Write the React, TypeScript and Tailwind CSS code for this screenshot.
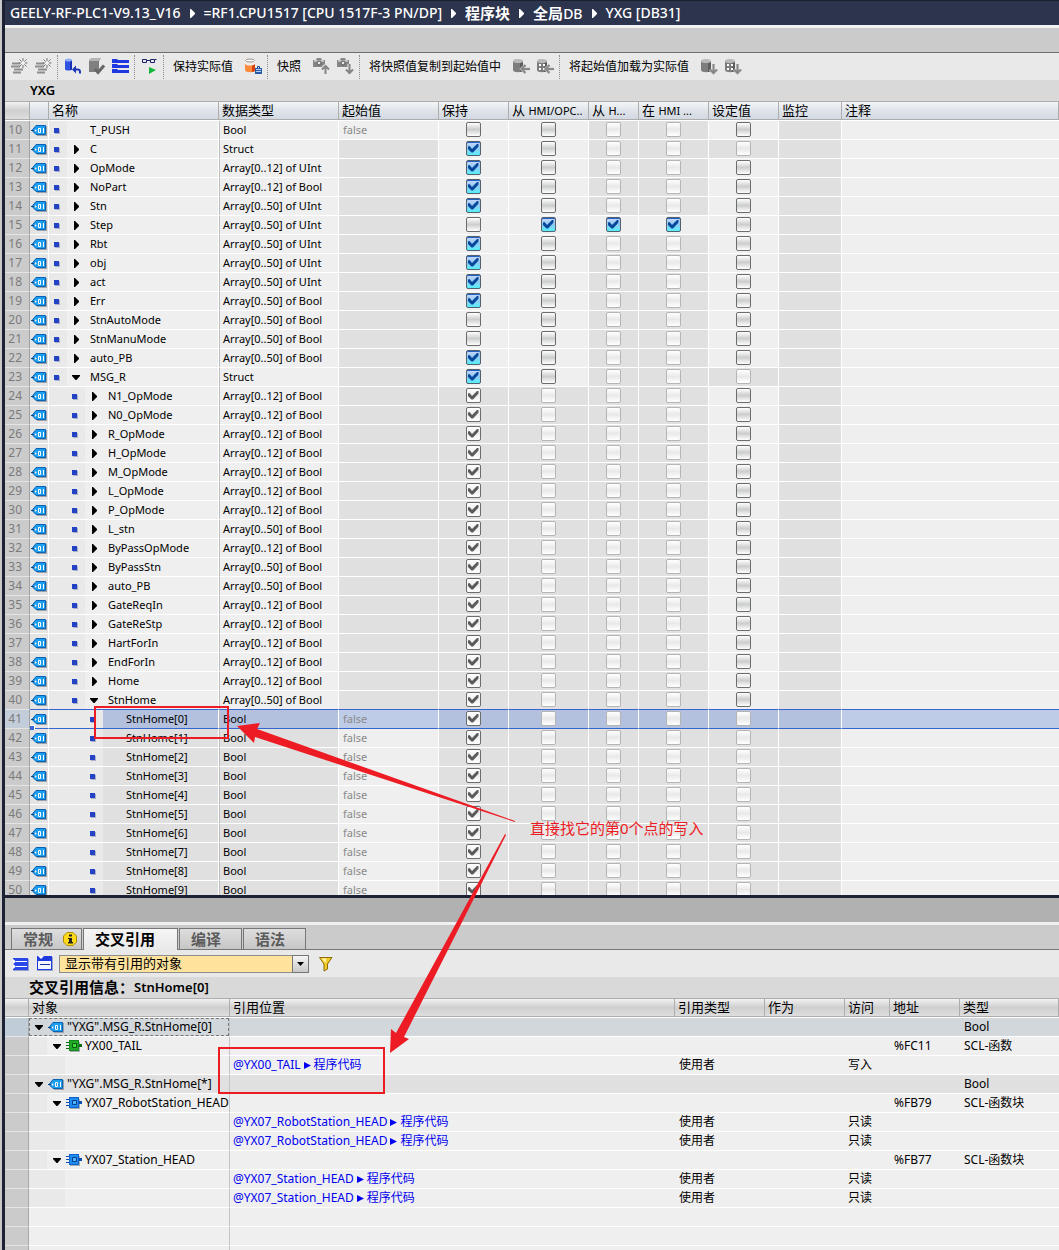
import type { ReactNode } from "react";

type Box = "on" | "off" | "locked" | "disabled";

type Variable = {
  no: number;
  name: string;
  type: string;
  level: 1 | 2 | 3;
  open?: boolean;
  leaf?: boolean;
  start?: string;
  boxes: [Box, Box, Box, Box, Box];
  selected?: boolean;
};

const top = (no: number, name: string, type: string, retain: Box): Variable => ({
  no,
  name,
  type,
  level: 1,
  boxes: [retain, "off", "disabled", "disabled", type === "Struct" ? "disabled" : "off"],
});

const groupNames = [
  "N1_OpMode", "N0_OpMode", "R_OpMode", "H_OpMode", "M_OpMode", "L_OpMode", "P_OpMode", "L_stn",
  "ByPassOpMode", "ByPassStn", "auto_PB", "GateReqIn", "GateReStp", "HartForIn", "EndForIn", "Home", "StnHome",
];
const longArrays = ["L_stn", "ByPassStn", "auto_PB", "StnHome"];

const variables: Variable[] = [
  { ...top(10, "T_PUSH", "Bool", "off"), leaf: true, start: "false" },
  top(11, "C", "Struct", "on"),
  top(12, "OpMode", "Array[0..12] of UInt", "on"),
  top(13, "NoPart", "Array[0..12] of Bool", "on"),
  top(14, "Stn", "Array[0..50] of UInt", "on"),
  { ...top(15, "Step", "Array[0..50] of UInt", "off"), boxes: ["off", "on", "on", "on", "off"] },
  top(16, "Rbt", "Array[0..50] of UInt", "on"),
  top(17, "obj", "Array[0..50] of UInt", "on"),
  top(18, "act", "Array[0..50] of UInt", "on"),
  top(19, "Err", "Array[0..50] of Bool", "on"),
  top(20, "StnAutoMode", "Array[0..50] of Bool", "off"),
  top(21, "StnManuMode", "Array[0..50] of Bool", "off"),
  top(22, "auto_PB", "Array[0..50] of Bool", "on"),
  { ...top(23, "MSG_R", "Struct", "on"), open: true },
  ...groupNames.map((name, i): Variable => ({
    no: 24 + i,
    name,
    type: longArrays.includes(name) ? "Array[0..50] of Bool" : "Array[0..12] of Bool",
    level: 2,
    open: name === "StnHome",
    boxes: ["locked", "disabled", "disabled", "disabled", "off"],
  })),
  ...Array.from({ length: 10 }, (_, i): Variable => ({
    no: 41 + i,
    name: `StnHome[${i}]`,
    type: "Bool",
    level: 3,
    leaf: true,
    start: "false",
    selected: i === 0,
    boxes: ["locked", "disabled", "disabled", "disabled", "disabled"],
  })),
];

const boxLabels = ["保持", "从 HMI/OPC UA 可访问", "从 HMI 可写", "在 HMI 可见", "设定值"];

type Reference = {
  level: 0 | 1 | 2;
  label?: string;
  icon?: "tag" | "fc" | "fb";
  place?: string;
  kind?: string;
  access?: string;
  address?: string;
  type?: string;
};

const usage = (place: string, access: string): Reference => ({ level: 2, place, kind: "使用者", access });

const references: Reference[] = [
  { level: 0, label: '"YXG".MSG_R.StnHome[0]', icon: "tag", type: "Bool" },
  { level: 1, label: "YX00_TAIL", icon: "fc", address: "%FC11", type: "SCL-函数" },
  usage("@YX00_TAIL", "写入"),
  { level: 0, label: '"YXG".MSG_R.StnHome[*]', icon: "tag", type: "Bool" },
  { level: 1, label: "YX07_RobotStation_HEAD", icon: "fb", address: "%FB79", type: "SCL-函数块" },
  usage("@YX07_RobotStation_HEAD", "只读"),
  usage("@YX07_RobotStation_HEAD", "只读"),
  { level: 1, label: "YX07_Station_HEAD", icon: "fb", address: "%FB77", type: "SCL-函数块" },
  usage("@YX07_Station_HEAD", "只读"),
  usage("@YX07_Station_HEAD", "只读"),
];

function Caret({ open }: { open?: boolean }) {
  return open ? (
    <svg width="8" height="5" viewBox="0 0 8 5"><path d="M0 0h8v1L4.500 5h-1L0 1z" /></svg>
  ) : (
    <svg width="5" height="9" viewBox="0 0 5 9"><path d="M0 0h1l4 4v1L1 9H0z" /></svg>
  );
}

function TagIcon() {
  return (
    <svg width="16" height="11" viewBox="0 0 16 11" className="shrink-0">
      <path d="M5 1h11v10H6z" fill="#9aa3ab" />
      <path d="M1 5.5 5 .5h9.5v9H5z" fill="#1b9df0" stroke="#0a62b4" />
      <path d="M0 5.500h5" stroke="#0a4a86" />
      <circle cx="4.500" cy="5.500" r="1" fill="#fff" />
      <path d="M7.500 3.500h2v4h-2zM12.500 3v5" fill="none" stroke="#fff" />
    </svg>
  );
}

function BlockIcon({ green }: { green?: boolean }) {
  return (
    <svg width="16" height="12" viewBox="0 0 16 12" className="shrink-0">
      <path d="M4 2h10v10H4z" fill="#a8adb5" />
      <path d="M0 2.500h4M0 5.500h4M0 8.500h4" stroke={green ? "#0b6a12" : "#0a4fb0"} />
      <path d="M12 5.500h4" stroke={green ? "#0b6a12" : "#0a4fb0"} strokeWidth="3" />
      <path d="M3 0h10v11H3z" fill={green ? "#138a1c" : "#0f62c8"} />
      <path d="M4 1h8v9H4z" fill={green ? "#22a92c" : "#1f8cf2"} />
      <path d="M6.500 3.500h4v4h-4z" fill={green ? "#3fe03a" : "#4fb4ff"} stroke={green ? "#0b5a12" : "#0a3f90"} />
    </svg>
  );
}

const boxStyles: Record<Box, string> = {
  on: "border-[#55606e] bg-linear-to-b from-[#c9d9fa] via-[#8fc8f0] to-[#4ff0fa] shadow-[inset_0_1px_0_#2262c4]",
  off: "border-[#6c6c6c] bg-linear-to-b from-white via-[#cccdce] to-white",
  locked: "border-[#6c6c6c] bg-linear-to-b from-white via-[#ededed] to-white",
  disabled: "border-[#b5b5b5] bg-linear-to-b from-white via-[#e9e9e9] to-white",
};

function CheckBox({ state, label }: { state: Box; label: string }) {
  const checked = state === "on" || state === "locked";
  return (
    <span className="grid h-[18px] content-start items-center justify-items-center pt-px">
      <input
        type="checkbox"
        aria-label={label}
        defaultChecked={checked}
        disabled={state === "locked" || state === "disabled"}
        className={`col-start-1 row-start-1 size-[15px] appearance-none rounded-[2px] border ${boxStyles[state]}`}
      />
      {checked && (
        <svg width="11" height="9" viewBox="0 0 11 9" className="pointer-events-none col-start-1 row-start-1">
          <path d="M0 2.500 1.500 2 4 5 9 0l1.500 0v2.500L5 8.500H3.500L0 5z" fill={state === "on" ? "#07489c" : "#5a5a5a"} />
        </svg>
      )}
    </span>
  );
}

function Cylinder({ fill = "#7d7d7d", lid = "#b9b9b9", shade = "#5d5d5d" }) {
  return (
    <>
      <path d="M0 3v9c0 3 10 3 10 0V3z" fill={fill} />
      <path d="M7 4v10c2 0 3-1 3-2V3z" fill={shade} />
      <ellipse cx="5" cy="3" rx="5" ry="2" fill={lid} />
    </>
  );
}

function Icon({ children }: { children: ReactNode }) {
  return <svg width="17" height="17" viewBox="0 0 17 17" fill="none">{children}</svg>;
}

const insertIcon = (
  <Icon>
    <path d="M1 5.500h8M0 8.500h9M3 11.500h9M2 14.500h8" stroke="#8d8d8d" strokeWidth="2" />
    <path d="M12 0v10M7.500 5h9M8.500 1.500l7 7M15.500 1.500l-7 7" stroke="#777" />
    <circle cx="12" cy="5" r="2" fill="#f2f2f2" />
  </Icon>
);

const upArrow = "M12.500 16V8M9 11.500 12.500 8l3.500 3.500";
const downArrow = "M12.500 6v9M9 11.500l3.500 3.500 3.500-3.500";
const leftArrow = "M17 11H9M12.500 7l-4 4 4 4";

function CameraIcon({ arrow }: { arrow: string }) {
  return (
    <Icon>
      <path d="M0 2h3l1-2h4l1 2h3v7H0z" fill="#858585" />
      <path d="M1 2h10v2H1z" fill="#bdbdbd" />
      <circle cx="6" cy="5" r="2" fill="#e6e6e6" stroke="#555" />
      <path d={arrow} stroke="#e9e9e9" strokeWidth="4" />
      <path d={arrow} stroke="#858585" strokeWidth="2" />
    </Icon>
  );
}

function StoreIcon({ arrow, dots }: { arrow: string; dots?: boolean }) {
  return (
    <Icon>
      <Cylinder />
      {dots && <path d="M2 7h2M6 7h2M2 11h2M6 11h2" stroke="#fff" strokeWidth="2" />}
      <path d={arrow} stroke="#d4d4d4" strokeWidth="3" />
      <path d={arrow} stroke="#888" strokeWidth="2" />
    </Icon>
  );
}

function ToolButton({ label, children }: { label: string; children: ReactNode }) {
  return (
    <button type="button" aria-label={label} className="flex h-6 w-6 shrink-0 items-center justify-center">
      {children}
    </button>
  );
}

function Separator() {
  return <div className="mx-[2px] h-6 w-px shrink-0 border-l border-dotted border-[#8e8e8e]" />;
}

function ToolText({ children }: { children: ReactNode }) {
  return <button type="button" className="mr-2 ml-[7px] whitespace-nowrap">{children}</button>;
}

function Breadcrumb() {
  const parts: ReactNode[] = [
    "GEELY-RF-PLC1-V9.13_V16",
    "=RF1.CPU1517 [CPU 1517F-3 PN/DP]",
    <span className="text-[15px] font-bold">程序块</span>,
    <><span className="text-[15px] font-bold">全局</span>DB</>,
    "YXG [DB31]",
  ];
  return (
    <nav className="flex h-[25px] shrink-0 items-center gap-[9px] border-t border-[#1b2030] bg-[#2d344d] pl-[5px] text-[14px] leading-none font-medium whitespace-nowrap text-white">
      {parts.map((part, i) => (
        <div key={i} className="flex items-center gap-[9px]">
          {i > 0 && <svg width="5" height="9" viewBox="0 0 5 9"><path d="M0 0h1l4 4v1L1 9H0z" fill="#fff" /></svg>}
          <span>{part}</span>
        </div>
      ))}
    </nav>
  );
}

function Toolbar() {
  return (
    <div className="flex h-7 shrink-0 items-center border-t border-[#6f6f6f] bg-[#e9e9e9] pl-[2px] text-[12px]">
      <ToolButton label="插入行">{insertIcon}</ToolButton>
      <ToolButton label="添加行">{insertIcon}</ToolButton>
      <Separator />
      <ToolButton label="复位起始值">
        <Icon>
          <path d="M1 2v9c0 2 7 2 7 0V2z" fill="#2f52e0" />
          <path d="M6 3v9c1 0 2 0 2-1V2z" fill="#1a2fb8" />
          <ellipse cx="4.500" cy="2" rx="3.500" ry="1.500" fill="#8fb0ff" />
          <path d="M10 11.500h4c2 0 2 1 2 4" stroke="#1c35b4" strokeWidth="2" />
          <path d="M8 11.500l4-4v8z" fill="#1c35b4" />
        </Icon>
      </ToolButton>
      <ToolButton label="更新接口">
        <Icon>
          <path d="M1 2 4 0h9L11 3v11H1z" fill="#808080" />
          <path d="M1 2 4 0h9l-2 3H1z" fill="#b4b4b4" />
          <path d="M7 11l3 3.500 6-7" stroke="#666" strokeWidth="3" />
        </Icon>
      </ToolButton>
      <ToolButton label="展开模式">
        <Icon>
          <path d="M0 1h5l1 1h11v3H0zM0 6h5l1 1h11v3H0zM0 11h5l1 1h11v3H0z" fill="#2038e0" />
        </Icon>
      </ToolButton>
      <Separator />
      <ToolButton label="全部监视">
        <Icon>
          <path d="M1.500 1.500h4v3h-4zM9.500 1.500h4v3h-4zM5.500 2.500h4M13.500 1.500h2" stroke="#1b2168" />
          <path d="M8 9l7 3-7 4z" fill="#15b83c" />
        </Icon>
      </ToolButton>
      <Separator />
      <ToolText>保持实际值</ToolText>
      <ToolButton label="保持实际值">
        <Icon>
          <Cylinder fill="#ff8a3c" lid="#d9d4d0" shade="#d8440e" />
          <path d="M0 3v3c2 2 8 2 10 0V3" fill="#efebe8" />
          <ellipse cx="5" cy="2.500" rx="4.500" ry="1.500" fill="#fff" stroke="#9a8f88" />
          <path d="M12.500 10V8.500h2V10" stroke="#1d478e" />
          <path d="M10 10h7v6h-7z" fill="#265aa8" />
          <path d="M11 11.500h5M11 13.500h5" stroke="#b9d2f5" />
        </Icon>
      </ToolButton>
      <Separator />
      <ToolText>快照</ToolText>
      <ToolButton label="加载快照"><CameraIcon arrow={upArrow} /></ToolButton>
      <ToolButton label="创建快照"><CameraIcon arrow={downArrow} /></ToolButton>
      <Separator />
      <ToolText>将快照值复制到起始值中</ToolText>
      <ToolButton label="复制全部快照值"><StoreIcon arrow={leftArrow} /></ToolButton>
      <ToolButton label="复制设定快照值"><StoreIcon arrow={leftArrow} dots /></ToolButton>
      <Separator />
      <ToolText>将起始值加载为实际值</ToolText>
      <ToolButton label="加载全部起始值"><StoreIcon arrow={downArrow} /></ToolButton>
      <ToolButton label="加载设定起始值"><StoreIcon arrow={downArrow} dots /></ToolButton>
    </div>
  );
}

function HeadCell({ children, blue }: { children?: ReactNode; blue?: boolean }) {
  return (
    <th className="border-b border-white p-0 text-left font-normal">
      <div
        className={`flex h-[19px] items-center overflow-hidden border-y border-r border-[#adadad] bg-linear-to-b pl-[3px] text-[13px] leading-none whitespace-pre ${
          blue ? "from-[#f4f6f8] via-[#dfe4ea] to-[#d3d9e2]" : "from-[#f2f2f2] via-[#cfcfcf] to-[#dedede]"
        }`}
      >
        {children}
      </div>
    </th>
  );
}

function VariableRow({ row }: { row: Variable }) {
  const line = row.selected || row.no === 40 ? "border-b-[#3566cf]" : "border-b-white";
  const light = row.selected ? "bg-[#bfcce8]" : "bg-[#efefef]";
  const dark = row.selected ? "bg-[#b4c1de]" : "bg-[#e0e0e0]";
  const cell = `h-[19px] p-0 align-top border-b border-r border-r-white ${line}`;
  const fill = row.level === 3 ? dark : light;
  const pad = { 1: "w-[18px]", 2: "w-[36px]", 3: "w-[54px]" }[row.level];
  return (
    <tr>
      <td className={`h-[19px] border-r border-b border-r-[#a0a0a0] border-b-[#e4e4e4] p-0 pr-[7px] text-right align-top text-[12px] text-[#7b7b7b] ${row.selected ? "bg-[#c3cdd9]" : "bg-[#cbcbcb]"}`}>
        {row.no}
      </td>
      <td className={`${cell} bg-[#e4e4e4]`}>
        <div className="flex h-[18px] items-center pl-px"><TagIcon /></div>
      </td>
      <td className={`${cell} ${fill}`}>
        <div className="flex h-[18px] items-center">
          <div className={`flex h-full shrink-0 items-center justify-end bg-[#e9e9e9] pr-2 ${pad}`}>
            <span className="size-[5px] bg-[#2443c4] shadow-[1px_1px_0_#a9b0c8]" />
          </div>
          <div className="flex w-[18px] shrink-0 justify-center">{!row.leaf && <Caret open={row.open} />}</div>
          <span className="pl-[5px]">{row.name}</span>
        </div>
      </td>
      <td className={`${cell} border-l border-l-[#bdbdbd] ${fill}`}><span className="pl-[3px]">{row.type}</span></td>
      <td className={`${cell} text-[#8a8a8a] ${row.start ? light : dark}`}><span className="pl-1">{row.start}</span></td>
      {row.boxes.map((state, i) => (
        <td key={i} className={`${cell} ${state === "disabled" || state === "locked" ? dark : light}`}>
          <CheckBox state={state} label={`${row.name} ${boxLabels[i]}`} />
        </td>
      ))}
      <td className={`${cell} ${dark}`} />
      <td className={`h-[19px] border-b ${line} ${light}`} />
    </tr>
  );
}

function VariableTable() {
  const small = "text-[11px]";
  return (
    <div className="min-h-0 flex-1 overflow-hidden bg-[#efefef]">
      <table className="w-full table-fixed border-separate border-spacing-0 text-[11px] leading-[18px] whitespace-nowrap">
        <colgroup>
          <col className="w-[25px]" />
          <col className="w-[19px]" />
          <col className="w-[170px]" />
          <col className="w-[120px]" />
          <col className="w-[100px]" />
          <col className="w-[70px]" />
          <col className="w-[80px]" />
          <col className="w-[50px]" />
          <col className="w-[70px]" />
          <col className="w-[70px]" />
          <col className="w-[63px]" />
          <col />
        </colgroup>
        <thead>
          <tr>
            <HeadCell />
            <HeadCell blue />
            <HeadCell blue>名称</HeadCell>
            <HeadCell blue>数据类型</HeadCell>
            <HeadCell blue>起始值</HeadCell>
            <HeadCell blue>保持</HeadCell>
            <HeadCell blue>从 <span className={small}>HMI/OPC..</span></HeadCell>
            <HeadCell blue>从 <span className={small}>H...</span></HeadCell>
            <HeadCell blue>在 <span className={small}>HMI ...</span></HeadCell>
            <HeadCell blue>设定值</HeadCell>
            <HeadCell blue>监控</HeadCell>
            <HeadCell blue>注释</HeadCell>
          </tr>
        </thead>
        <tbody>
          {variables.map((row) => <VariableRow key={row.no} row={row} />)}
        </tbody>
      </table>
    </div>
  );
}

function Tab({ children, active }: { children: ReactNode; active?: boolean }) {
  return (
    <button
      type="button"
      role="tab"
      aria-selected={!!active}
      className={`flex items-center border-x border-t border-[#777] pl-[11px] text-[15px] leading-none font-bold ${
        active
          ? "h-[22px] w-[95px] bg-linear-to-b from-[#f6f6f6] to-[#e9e9e9] text-black"
          : "h-[21px] w-[63px] bg-linear-to-b from-[#dedede] to-[#c6c6c6] text-[#5b5b5b]"
      }`}
    >
      {children}
    </button>
  );
}

function InspectorTabs() {
  return (
    <div role="tablist" className="flex h-[25px] shrink-0 items-start gap-px bg-[#cbcbcb] pt-[3px] pl-[6px] shadow-[inset_0_-1px_0_#777]">
      <button
        type="button"
        role="tab"
        aria-selected={false}
        className="flex h-[21px] w-[71px] items-center justify-between border-x border-t border-[#777] bg-linear-to-b from-[#dedede] to-[#c6c6c6] pr-1 pl-[11px] text-[15px] leading-none font-bold text-[#5b5b5b]"
      >
        常规
        <svg width="14" height="14" viewBox="0 0 14 14">
          <path d="M4 .5h6L13.500 4v6L10 13.500H4L.5 10V4z" fill="#ffd91a" stroke="#b08c00" />
          <path d="M6 2.500h3v2H6zM5 6h4v4h1v1.500H5V10h1V7H5z" fill="#222" />
        </svg>
      </button>
      <Tab active>交叉引用</Tab>
      <Tab>编译</Tab>
      <Tab>语法</Tab>
    </div>
  );
}

function InspectorToolbar() {
  return (
    <div className="flex h-[27px] shrink-0 items-center bg-[#e9e9e9] pl-[3px]">
      <ToolButton label="全部折叠">
        <Icon>
          <path d="M1 3h15v12H1z" fill="#2a48ea" />
          <path d="M1 15.500h16M16.500 4v12" stroke="#9aa3c8" />
          <path d="M4 6.500h11M4 11.500h11" stroke="#fff" />
          <path d="M1 4l3 2.500L1 9zM1 9l3 2.500L1 14z" fill="#fff" />
        </Icon>
      </ToolButton>
      <ToolButton label="全部展开">
        <Icon>
          <path d="M1 1h15v14H1z" fill="#1f3be0" />
          <path d="M1 15.500h16M16.500 2v14" stroke="#9aa3c8" />
          <path d="M2 1h6L5 4z" fill="#fff" />
          <path d="M2 6h13v8H2z" fill="#f3f5ff" />
          <path d="M4 9.500h10" stroke="#1f2f90" />
        </Icon>
      </ToolButton>
      <div className="ml-[3px] grid w-[250px] items-center">
        <select
          aria-label="显示过滤"
          className="col-start-1 row-start-1 h-[18px] appearance-none border border-[#8d8d8d] bg-[#ffe39c] pl-[5px] text-[13px] leading-none text-black"
        >
          <option>显示带有引用的对象</option>
        </select>
        <span className="pointer-events-none col-start-1 row-start-1 flex h-[18px] w-[17px] items-center justify-center justify-self-end border border-[#777] bg-linear-to-b from-[#f4f4f4] to-[#c9c9c9]">
          <svg width="7" height="4" viewBox="0 0 7 4"><path d="M0 0h7L3.500 4z" /></svg>
        </span>
      </div>
      <button type="button" aria-label="过滤" className="ml-[10px]">
        <svg width="14" height="16" viewBox="0 0 14 16">
          <path d="M.5 1.500h12.500L8.500 8v5L5 15V8z" fill="#f2c92a" stroke="#8d6c00" />
          <path d="M2.500 2.500h5L6.500 7z" fill="#fff3a6" />
        </svg>
      </button>
    </div>
  );
}

function ReferenceRow({ row, first }: { row?: Reference; first?: boolean }) {
  const bg = first ? "bg-[#d2d7db]" : row?.level === 0 ? "bg-[#e0e0e0]" : "bg-[#efefef]";
  const cell = `h-[19px] border-b border-white p-0 align-top ${bg}`;
  const pad = ["w-0", "w-[18px]", "w-[36px]"][row?.level ?? 0];
  return (
    <tr>
      <td className={`h-[19px] border-r border-b border-r-[#a8a8a8] border-b-[#e4e4e4] p-0 ${first ? "bg-[#c0ccd8]" : "bg-[#cbcbcb]"}`} />
      <td className={`h-[19px] border-r border-b border-r-[#c4c4c4] border-b-white p-0 ${bg}`}>
        <div className={`flex h-[18px] items-center ${first ? "outline outline-dashed -outline-offset-1 outline-[#777]" : ""}`}>
          <div className={`h-full shrink-0 bg-[#e9e9e9] ${pad}`} />
          {row?.label && (
            <>
              <div className="flex w-[19px] shrink-0 justify-center"><Caret open /></div>
              {row.icon === "tag" ? <TagIcon /> : <BlockIcon green={row.icon === "fc"} />}
              <span className="pl-[3px]">{row.label}</span>
            </>
          )}
        </div>
      </td>
      <td className={`${cell} pl-[3px]`}>
        {row?.place && (
          <a href="#code" className="flex h-[18px] items-center gap-[3px] text-[#0000f0]">
            {row.place}
            <svg width="7" height="7" viewBox="0 0 7 7"><path d="M0 0l7 3.500L0 7z" fill="#0000f0" /></svg>
            程序代码
          </a>
        )}
      </td>
      <td className={`${cell} pl-1`}>{row?.kind}</td>
      <td className={`${cell} pl-1`} />
      <td className={`${cell} pl-[3px]`}>{row?.access}</td>
      <td className={`${cell} pl-1`}>{row?.address}</td>
      <td className={`${cell} pl-1`}>{row?.type}</td>
    </tr>
  );
}

function ReferenceTable() {
  return (
    <table className="w-full table-fixed border-separate border-spacing-0 text-[12px] leading-[18px] whitespace-nowrap">
      <colgroup>
        <col className="w-[24px]" />
        <col className="w-[201px]" />
        <col className="w-[445px]" />
        <col className="w-[90px]" />
        <col className="w-[80px]" />
        <col className="w-[45px]" />
        <col className="w-[70px]" />
        <col />
      </colgroup>
      <thead>
        <tr>
          <HeadCell />
          {["对象", "引用位置", "引用类型", "作为", "访问", "地址", "类型"].map((title) => (
            <HeadCell key={title}>{title}</HeadCell>
          ))}
        </tr>
      </thead>
      <tbody>
        {references.map((row, i) => <ReferenceRow key={i} row={row} first={i === 0} />)}
        <ReferenceRow />
        <ReferenceRow />
        <ReferenceRow />
      </tbody>
    </table>
  );
}

// Hand-drawn marks that sit over both tables
function Annotations() {
  return (
    <div className="pointer-events-none absolute inset-0 overflow-hidden">
      <svg width="1059" height="1250" viewBox="0 0 1059 1250" className="absolute top-0 left-0">
        <path d="M30 725h5v5h-5z" fill="#fff" />
        <path d="M30 726h4v4h-4z" fill="#3566cf" />
        <g fill="#ed1c24">
          <path d="M237 726l23-3-3 6 258 92v1L255 737l-1 6z" />
          <path d="M390 1053l1-24 5 4L505 834l1 1L404 1037l5 2z" />
        </g>
        <g fill="none" stroke="#ed1c24" strokeWidth="2">
          <rect x="95" y="707" width="133" height="31" />
          <rect x="219" y="1048" width="165" height="45" />
        </g>
      </svg>
      <p className="absolute top-[817px] left-[530px] text-[15px] leading-[22px] text-[#ed1c24]">直接找它的第0个点的写入</p>
    </div>
  );
}

export default function App() {
  return (
    <div className="relative flex h-screen overflow-hidden bg-[#c8c8c8] pl-[2px] font-['Noto_Sans','Noto_Sans_CJK_SC',sans-serif] text-black">
      <main className="flex min-w-0 flex-1 flex-col border-l-[3px] border-[#1c2233]">
        <Breadcrumb />
        <div className="h-[27px] shrink-0 border-t-[3px] border-[#f3f3f3] bg-[#cbcbcb]" />
        <Toolbar />
        <h1 className="h-[21px] shrink-0 bg-[#d9d9d9] pl-[25px] text-[13px] leading-[21px] font-semibold">YXG</h1>
        <VariableTable />
        <section className="flex h-[355px] shrink-0 flex-col overflow-hidden border-t-[3px] border-[#1c2233] bg-[#efefef]">
          <div className="h-[27px] shrink-0 border-b-[3px] border-[#f0f0f0] bg-[#b1b1b1]" />
          <InspectorTabs />
          <InspectorToolbar />
          <h2 className="flex h-[21px] shrink-0 items-center bg-[#d9d9d9] pl-[24px] text-[15px] leading-none font-bold">
            交叉引用信息：<span className="text-[13px] font-semibold">StnHome[0]</span>
          </h2>
          <ReferenceTable />
        </section>
      </main>
      <Annotations />
    </div>
  );
}
